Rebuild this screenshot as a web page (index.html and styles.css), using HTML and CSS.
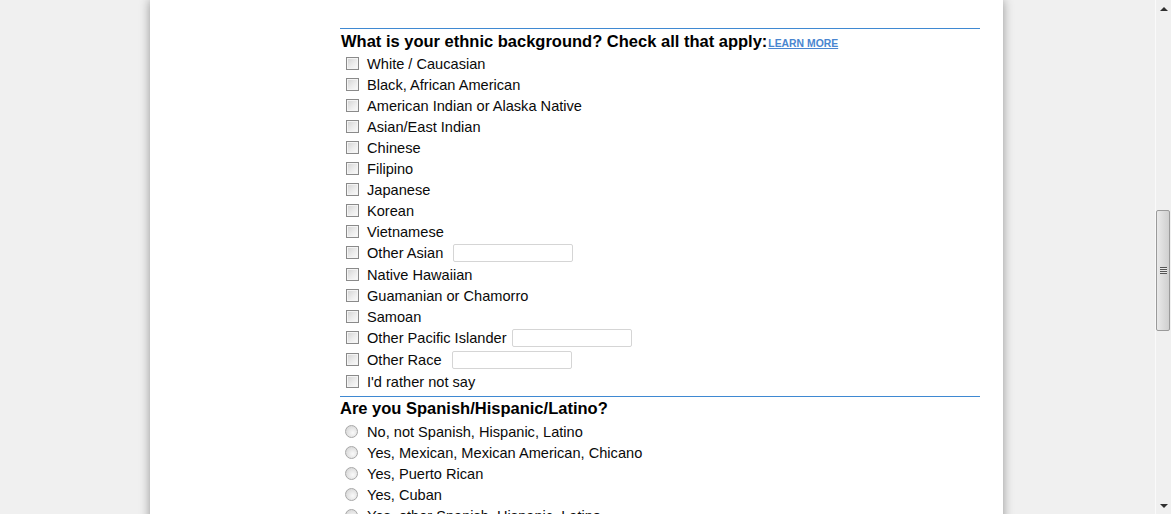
FILE: index.html
```html
<!DOCTYPE html>
<html>
<head>
<meta charset="utf-8">
<link rel="stylesheet" href="styles.css">
</head>
<body>
<div class="viewport">
  <div class="sheet">
    <div class="survey">
      <section class="question">
        <h2 class="q-title">What is your ethnic background? Check all that apply:<a class="learn" href="#">LEARN MORE</a></h2>
        <div class="opts">
          <label class="row"><input type="checkbox" class="cb"><span>White / Caucasian</span></label>
          <label class="row"><input type="checkbox" class="cb"><span>Black, African American</span></label>
          <label class="row"><input type="checkbox" class="cb"><span>American Indian or Alaska Native</span></label>
          <label class="row"><input type="checkbox" class="cb"><span>Asian/East Indian</span></label>
          <label class="row"><input type="checkbox" class="cb"><span>Chinese</span></label>
          <label class="row"><input type="checkbox" class="cb"><span>Filipino</span></label>
          <label class="row"><input type="checkbox" class="cb"><span>Japanese</span></label>
          <label class="row"><input type="checkbox" class="cb"><span>Korean</span></label>
          <label class="row"><input type="checkbox" class="cb"><span>Vietnamese</span></label>
          <label class="row tall"><input type="checkbox" class="cb"><span>Other Asian</span><input type="text" class="txt gap10"></label>
          <label class="row"><input type="checkbox" class="cb"><span>Native Hawaiian</span></label>
          <label class="row"><input type="checkbox" class="cb"><span>Guamanian or Chamorro</span></label>
          <label class="row"><input type="checkbox" class="cb"><span>Samoan</span></label>
          <label class="row tall"><input type="checkbox" class="cb"><span>Other Pacific Islander</span><input type="text" class="txt gap5"></label>
          <label class="row tall"><input type="checkbox" class="cb"><span>Other Race</span><input type="text" class="txt gap10"></label>
          <label class="row"><input type="checkbox" class="cb"><span>I'd rather not say</span></label>
        </div>
      </section>
      <section class="question second">
        <h2 class="q-title">Are you Spanish/Hispanic/Latino?</h2>
        <div class="opts radios">
          <label class="row"><input type="radio" name="hisp" class="rd"><span>No, not Spanish, Hispanic, Latino</span></label>
          <label class="row"><input type="radio" name="hisp" class="rd"><span>Yes, Mexican, Mexican American, Chicano</span></label>
          <label class="row"><input type="radio" name="hisp" class="rd"><span>Yes, Puerto Rican</span></label>
          <label class="row"><input type="radio" name="hisp" class="rd"><span>Yes, Cuban</span></label>
          <label class="row"><input type="radio" name="hisp" class="rd"><span>Yes, other Spanish, Hispanic, Latino</span></label>
        </div>
      </section>
    </div>
  </div>
</div>
<div class="scrollbar">
  <div class="arrow up"></div>
  <div class="track">
    <div class="thumb"><div class="grip"></div></div>
  </div>
  <div class="arrow down"></div>
</div>
</body>
</html>
```

FILE: styles.css
```css
html, body {
  margin: 0;
  padding: 0;
  height: 514px;
  overflow: hidden;
}
body {
  display: flex;
  background: #f0f0f0;
  font-family: "Liberation Sans", Arial, sans-serif;
  color: #000;
}
.viewport {
  flex: 1;
  height: 514px;
  overflow: hidden;
  padding-left: 150px;
}
.sheet {
  width: 853px;
  height: 700px;
  background: #fff;
  box-shadow: 0 0 10px rgba(0,0,0,0.38);
}
.survey {
  margin-left: 190px;
  width: 640px;
  padding-top: 28px;
}
.question {
  border-top: 1px solid #3f89d2;
}
.question.second {
  margin-top: 4px;
}
.q-title {
  margin: 0;
  font-size: 16.5px;
  font-weight: bold;
  height: 24px;
  line-height: 24px;
  padding-left: 1px;
}
.second .q-title {
  padding-left: 0;
  height: 22px;
  line-height: 22px;
}
.learn {
  font-size: 10.4px;
  font-weight: bold;
  color: #4a86d0;
  text-decoration: underline;
  margin-left: 1px;
}
.opts {
  display: flex;
  flex-direction: column;
}
.radios {
  margin-top: 2px;
}
.row {
  display: flex;
  align-items: center;
  height: 21px;
  font-size: 14.6px;
  color: #0a0a0a;
}
.row.tall {
  height: 22px;
  padding-bottom: 1px;
  box-sizing: border-box;
}
.cb {
  -webkit-appearance: none;
  appearance: none;
  box-sizing: border-box;
  width: 13px;
  height: 13px;
  margin: 0 8px 0 6px;
  border: 1px solid #8a8a8a;
  background: linear-gradient(135deg, #d2d2d2 0%, #ececec 55%, #fbfbfb 100%);
  box-shadow: inset 0 0 0 1px #f4f4f4;
  flex: none;
}
.rd {
  -webkit-appearance: none;
  appearance: none;
  box-sizing: border-box;
  width: 13px;
  height: 13px;
  margin: 0 9px 0 5px;
  border-radius: 50%;
  border: 1px solid #a8a8a8;
  background: radial-gradient(circle at 62% 62%, #fafafa 0%, #e2e2e2 55%, #cfcfcf 100%);
  flex: none;
}
.txt {
  box-sizing: border-box;
  width: 120px;
  height: 18px;
  border: 1px solid #d5d5d5;
  border-radius: 2px;
  background: #fff;
  padding: 0;
}
.gap10 { margin-left: 10px; }
.gap5 { margin-left: 5px; }

.scrollbar {
  width: 16px;
  height: 514px;
  display: flex;
  flex-direction: column;
  background: #f0f0f0;
  border-left: 1px solid #fafafa;
  box-sizing: border-box;
}
.arrow {
  height: 17px;
  display: flex;
  align-items: center;
  justify-content: center;
}
.arrow.up::before {
  content: "";
  border-left: 4px solid transparent;
  border-right: 4px solid transparent;
  border-bottom: 4px solid #303030;
}
.arrow.down::before {
  content: "";
  border-left: 4px solid transparent;
  border-right: 4px solid transparent;
  border-top: 4px solid #303030;
}
.track {
  flex: 1;
  padding-top: 193px;
}
.thumb {
  box-sizing: border-box;
  width: 14px;
  height: 121px;
  border: 1px solid #9a9a9a;
  border-radius: 2px;
  background: linear-gradient(90deg, #eaeaea 0%, #dcdcdc 50%, #cfcfcf 100%);
  display: flex;
  align-items: center;
  justify-content: center;
}
.grip {
  width: 7px;
  height: 7px;
  background: repeating-linear-gradient(180deg, #555 0 1px, #e8e8e8 1px 2px);
}
```
